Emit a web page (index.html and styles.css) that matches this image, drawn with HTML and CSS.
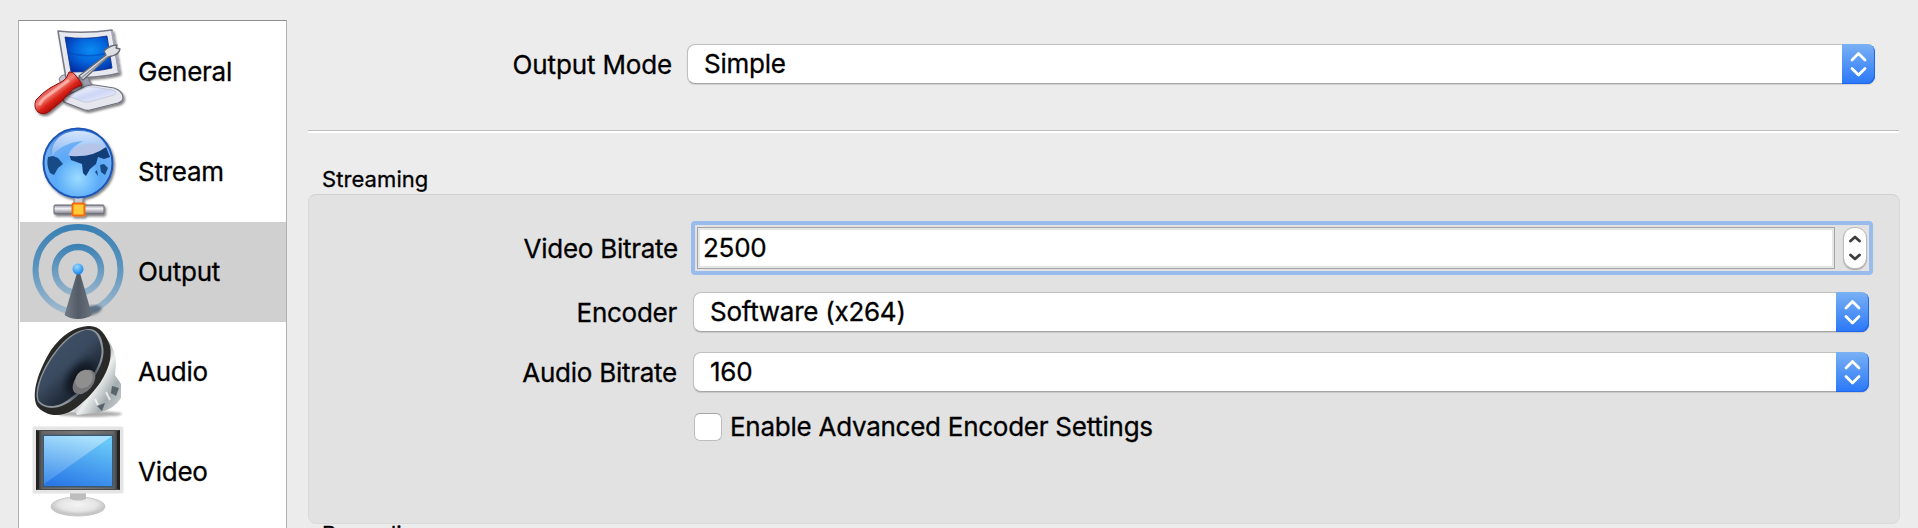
FILE: index.html
```html
<!DOCTYPE html>
<html lang="en">
<head>
<meta charset="utf-8">
<title>Settings</title>
<link rel="stylesheet" href="styles.css">
</head>
<body>
<div class="window">
  <nav class="sidebar">
    <div class="item">
      <svg class="icon" viewBox="0 0 100 100">
        <defs>
          <radialGradient id="scr" cx=".55" cy=".4" r=".65"><stop offset="0" stop-color="#0a8cf2"/><stop offset=".5" stop-color="#0566dc"/><stop offset="1" stop-color="#0230a8"/></radialGradient>
          <linearGradient id="red" gradientUnits="userSpaceOnUse" x1="22" y1="62" x2="36" y2="80"><stop offset="0" stop-color="#d03028"/><stop offset=".35" stop-color="#f4847a"/><stop offset=".65" stop-color="#dc2418"/><stop offset="1" stop-color="#a00808"/></linearGradient>
          <linearGradient id="base" x1="0" y1="0" x2="1" y2="1"><stop offset="0" stop-color="#fff"/><stop offset=".5" stop-color="#cdd6f6"/><stop offset="1" stop-color="#f4f4fa"/></linearGradient>
          <filter id="soft" x="-20%" y="-20%" width="140%" height="140%"><feDropShadow dx="1.5" dy="2" stdDeviation="1" flood-opacity=".5"/></filter>
        </defs>
        <g filter="url(#soft)">
          <path d="M31 57Q34 50 42 55L60 64L54 69L37 71Z" fill="#c5c6d2" stroke="#7d7f8c"/>
          <path d="M50 54L60 53Q60 60 66 65L54 68Z" fill="#9b9dab" stroke="#6e707d"/>
          <path d="M35 76L54 66Q60 62 67 63L86 66Q95 69 95 76Q95 79 90 81L62 88Q58 89 54 87L36 80Z" fill="#e5e6ee" stroke="#6e707d" stroke-width="1.2"/>
          <path d="M40 74L57 66Q61 64 66 65L84 68Q91 70 86 73L61 80Q57 81 53 79Z" fill="url(#base)" stroke="#b7bccd" stroke-width=".6"/>
          <path d="M30 9Q57 12 84 8L91 51Q73 56 38 56Z" fill="#e8e8ef" stroke="#777987" stroke-width="1.5" stroke-linejoin="round"/>
          <path d="M84 9L91 51" stroke="#a3a5b5" stroke-width="2"/>
        </g>
        <path d="M37 15Q57 18 79 14L84 46Q68 50 43 50Z" fill="url(#scr)" stroke="#0a2c86" stroke-width=".8"/>
        <path d="M41 31Q62 37 82 30" fill="none" stroke="#0448b8" stroke-width="1.5" opacity=".6"/>
        <path d="M51 54L78 33L76 29Q82 23 89 23L88 26L92 27Q91 32 84 34L80 35L55 58Z" fill="#dedfe3" stroke="#666975" stroke-width="1.3" stroke-linejoin="round"/>
        <path d="M52 57L79 35" stroke="#8e919b" stroke-width="1.2"/>
        <g filter="url(#soft)">
          <path d="M41 50Q45 49 48 54Q52 58 54 63Q49 65 45 67Q39 73 34 79L22 89Q16 94 10 90Q5 85 8 78Q14 71 22 66L35 59Q39 57 41 50Z" fill="url(#red)" stroke="#8e1010" stroke-width="1"/>
        </g>
        <path d="M40 59L22 72Q14 77 12 82" fill="none" stroke="#ffd1cb" stroke-width="3" stroke-linecap="round" opacity=".55"/>
      </svg>
      <span class="name">General</span>
    </div>
    <div class="item">
      <svg class="icon" viewBox="0 0 100 100">
        <defs>
          <radialGradient id="globe" cx=".5" cy=".72" r=".72"><stop offset="0" stop-color="#9bdcff"/><stop offset=".45" stop-color="#5aaaf8"/><stop offset=".8" stop-color="#74b0f4"/><stop offset="1" stop-color="#3676da"/></radialGradient>
          <linearGradient id="gloss" x1="0" y1="0" x2="0" y2="1"><stop offset="0" stop-color="#e6f1ff"/><stop offset="1" stop-color="#a9c7f4" stop-opacity=".6"/></linearGradient>
          <linearGradient id="pipe" x1="0" y1="0" x2="0" y2="1"><stop offset="0" stop-color="#90909b"/><stop offset=".4" stop-color="#f2f2f6"/><stop offset="1" stop-color="#777783"/></linearGradient>
        </defs>
        <g filter="url(#soft)">
          <rect x="46" y="72" width="9" height="11" fill="#c9cad2" stroke="#787b88"/>
          <rect x="26" y="83" width="50" height="9" rx="1" fill="url(#pipe)" stroke="#656570"/>
          <rect x="44.500" y="81.500" width="12" height="12" rx="1" fill="#ffca38" stroke="#f26a10" stroke-width="2"/>
          <circle cx="50" cy="41" r="34.500" fill="url(#globe)" stroke="#1c54b4" stroke-width="2"/>
        </g>
        <path d="M20 35L25 34L30 36L35 42L30 46L26 53L22 51Q18 43 20 35Z" fill="#174b86"/>
        <path d="M22 28L27 21L36 17L28 30L23 33Z" fill="#5f9ee0" opacity=".6"/>
        <path d="M41 32Q54 34 70 27L78 25L82 35L76 37L70 35L68 42L62 47L58 54L55 51L54 42L43 38Z" fill="#123f79"/>
        <path d="M72 43L76 42L80 46L77 53L73 50ZM67 50L69 48L70 54Z" fill="#174b86"/>
        <path d="M24 34C23 18 35 9 50 9C66 9 75 16 78 25C68 28 62 34 51 34C43 34 40 32 42 29C47 23 52 21 55 19C43 20 32 24 24 34Z" fill="url(#gloss)" opacity=".9"/>
        <path d="M40 33Q46 24 58 22Q70 20 78 25Q66 34 51 34Q43 35 40 33Z" fill="#b5c5ea"/>
      </svg>
      <span class="name">Stream</span>
    </div>
    <div class="item selected">
      <svg class="icon" viewBox="0 0 100 100">
        <defs>
          <linearGradient id="ring" gradientUnits="userSpaceOnUse" x1="0" y1="2" x2="0" y2="92"><stop offset="0" stop-color="#3a80b4"/><stop offset=".45" stop-color="#5792bd"/><stop offset="1" stop-color="#a4bbce"/></linearGradient>
          <linearGradient id="ring2" gradientUnits="userSpaceOnUse" x1="0" y1="22" x2="0" y2="74"><stop offset="0" stop-color="#3a80b4"/><stop offset="1" stop-color="#98b5cc"/></linearGradient>
          <linearGradient id="cone" x1="0" y1="0" x2="1" y2="0"><stop offset="0" stop-color="#737b86"/><stop offset=".5" stop-color="#535b66"/><stop offset="1" stop-color="#6a727d"/></linearGradient>
          <radialGradient id="ball" cx=".4" cy=".3" r=".7"><stop offset="0" stop-color="#9ad8ff"/><stop offset="1" stop-color="#1689ee"/></radialGradient>
          <filter id="blur"><feGaussianBlur stdDeviation="1.200"/></filter>
        </defs>
        <circle cx="50" cy="47.500" r="42.500" fill="none" stroke="url(#ring)" stroke-width="6"/>
        <circle cx="50" cy="48" r="23" fill="none" stroke="url(#ring2)" stroke-width="6.500"/>
        <path d="M55 92L61 84Q70 82 74 86Q73 92 60 94Z" fill="#3b4d60" opacity=".65" filter="url(#blur)"/>
        <path d="M49 51H52L64 93Q58 97 50 97Q42 97 36.500 93Z" fill="url(#cone)"/>
        <circle cx="50" cy="47" r="5.500" fill="url(#ball)"/>
      </svg>
      <span class="name">Output</span>
    </div>
    <div class="item">
      <svg class="icon" viewBox="0 0 100 100">
        <defs>
          <linearGradient id="dish" x1="0" y1="0" x2=".8" y2="1"><stop offset="0" stop-color="#43546b"/><stop offset=".5" stop-color="#3a4a5f"/><stop offset=".8" stop-color="#1a232f"/><stop offset="1" stop-color="#3c495c"/></linearGradient>
          <linearGradient id="metal" x1="0" y1="0" x2="1" y2="1"><stop offset="0" stop-color="#39444b"/><stop offset=".35" stop-color="#7c878b"/><stop offset=".55" stop-color="#eceeee"/><stop offset=".75" stop-color="#a3acaf"/><stop offset="1" stop-color="#d6dada"/></linearGradient>
          <radialGradient id="well"><stop offset="0" stop-color="#05080c"/><stop offset=".55" stop-color="#101822" stop-opacity=".7"/><stop offset="1" stop-color="#25354a" stop-opacity="0"/></radialGradient>
        </defs>
        <ellipse cx="62" cy="92" rx="32" ry="3" fill="#777" opacity=".6" filter="url(#blur)"/>
        <path d="M78 16Q88 27 88 42L87 53L93 62V76Q86 87 73 90L49 93L45 86Z" fill="url(#metal)"/>
        <path d="M84 64L91 66L88 74L83 71ZM69 84L77 81L74 89Z" fill="#38434a" opacity=".7"/>
        <path d="M78 70L82 78M67 77L70 83" stroke="#fff" stroke-width="2" opacity=".7"/>
        <path d="M60 4C71 3 78 12 82 24C87 48 64 75 45 88C31 97 16 93 9 84C3 72 10 49 23 28C34 13 46 5 60 4Z" fill="#292a28"/>
        <path d="M60 7C68 6 74 13 75 24C79 43 60 67 43 79C29 89 16 87 10 80C5 69 14 47 26 31C37 16 48 8 60 7Z" fill="#8d949a"/>
        <path d="M58 8C67 7 71 14 73 24C77 41 59 65 41 77C28 87 17 85 11 79C7 69 15 48 27 32C37 18 48 10 58 8Z" fill="url(#dish)"/>
        <ellipse cx="52" cy="56" rx="17" ry="29" transform="rotate(38 52 56)" fill="url(#well)"/>
        <ellipse cx="56" cy="60" rx="9" ry="14" transform="rotate(40 56 60)" fill="#777678"/>
        <ellipse cx="56" cy="57" rx="8" ry="10" transform="rotate(40 56 57)" fill="#908f90"/>
      </svg>
      <span class="name">Audio</span>
    </div>
    <div class="item">
      <svg class="icon" viewBox="0 0 100 100">
        <defs>
          <linearGradient id="lcd" x1=".6" y1="0" x2=".2" y2="1"><stop offset="0" stop-color="#68c8f8"/><stop offset="1" stop-color="#2a78e6"/></linearGradient>
          <linearGradient id="shine" x1=".5" y1="0" x2=".2" y2="1"><stop offset="0" stop-color="#a7e0fc"/><stop offset="1" stop-color="#4390ec"/></linearGradient>
          <linearGradient id="frame" x1="0" y1="0" x2="1" y2="0"><stop offset="0" stop-color="#222"/><stop offset=".08" stop-color="#666"/><stop offset=".5" stop-color="#777"/><stop offset=".92" stop-color="#666"/><stop offset="1" stop-color="#222"/></linearGradient>
          <radialGradient id="foot" cy=".4"><stop offset="0" stop-color="#f4f4f4"/><stop offset=".7" stop-color="#e5e5e5"/><stop offset="1" stop-color="#c7c7c7"/></radialGradient>
        </defs>
        <ellipse cx="50" cy="84.500" rx="27" ry="9.500" fill="url(#foot)" stroke="#c1c1c1" stroke-width=".8"/>
        <path d="M42 70H58V77Q50 80 42 77Z" fill="#bdbdbd"/>
        <rect x="4.500" y="4.500" width="91" height="67" rx="1.500" fill="#e5e5e5"/>
        <rect x="8" y="8" width="84" height="60" fill="url(#frame)"/>
        <path d="M9.500 8V68M90.500 8V68" stroke="#222" stroke-width="3"/>
        <path d="M9 8.500H91M9 67.500H91" stroke="#484848"/>
        <rect x="14.500" y="12.500" width="71" height="53" fill="#3e5870"/>
        <rect x="16" y="14" width="68" height="50" fill="url(#lcd)"/>
        <path d="M16 14H84L16 62Z" fill="url(#shine)"/>
      </svg>
      <span class="name">Video</span>
    </div>
  </nav>

  <main class="panel">
    <div class="row mode">
      <label class="label">Output Mode</label>
      <div class="combo"><span class="value">Simple</span><span class="arrows"><svg viewBox="0 0 33 40"><path d="M10 16L16.500 9.500L23 16M10 24.500L16.500 31L23 24.500"/></svg></span></div>
    </div>
    <hr class="rule">
    <h2 class="title">Streaming</h2>
    <section class="group">
      <div class="row bitrate">
        <label class="label">Video Bitrate</label>
        <div class="focus">
          <div class="field">2500</div>
          <div class="stepper"><svg viewBox="0 0 22 40"><path d="M6.500 13L11 9L15.500 13M6.500 27L11 31L15.500 27"/></svg></div>
        </div>
      </div>
      <div class="row encoder">
        <label class="label">Encoder</label>
        <div class="combo"><span class="value">Software (x264)</span><span class="arrows"><svg viewBox="0 0 33 40"><path d="M10 16L16.500 9.500L23 16M10 24.500L16.500 31L23 24.500"/></svg></span></div>
      </div>
      <div class="row audio">
        <label class="label">Audio Bitrate</label>
        <div class="combo"><span class="value">160</span><span class="arrows"><svg viewBox="0 0 33 40"><path d="M10 16L16.500 9.500L23 16M10 24.500L16.500 31L23 24.500"/></svg></span></div>
      </div>
      <div class="check"><span class="box"></span><span class="advanced">Enable Advanced Encoder Settings</span></div>
    </section>
    <h2 class="title next">Recording</h2>
  </main>
</div>
</body>
</html>
```
FILE: styles.css
```css
* { box-sizing: border-box; }
body {
  margin: 0;
  background: #ececec;
  color: #000;
  font: 26px/32px Inter, "Liberation Sans", sans-serif;
  letter-spacing: -.26px;
  -webkit-text-stroke: .3px #000;
}
.window { display: flex; height: 528px; overflow: hidden; }
.sidebar {
  flex: none;
  width: 269px;
  height: 540px;
  margin: 20px 21px 0 18px;
  padding: 1px 0 0 1px;
  background: #fff;
  border: 1px solid #b0b0b0;
  border-top-color: #8e8e8e;
}
.item { display: flex; align-items: center; height: 100px; padding-left: 8px; }
.selected { background: #d0d0d0; }
.icon { width: 100px; height: 100px; flex: none; margin-right: 10px; }
.name, .label, .value, .advanced { white-space: nowrap; }
.panel { flex: none; width: 1592px; }
.row { display: flex; }
.label { flex: none; text-align: right; }
.mode { padding: 44px 25px 0 0; }
.mode .label { width: 364px; margin-right: 15px; padding-top: 5px; letter-spacing: -.15px; }
.combo {
  display: flex;
  flex: 1;
  height: 40px;
  background: #fff;
  border: 1px solid #bfbfbf;
  border-bottom-color: #a5a5a5;
  border-radius: 8px;
  box-shadow: 0 1px 1px rgba(0, 0, 0, .12);
}
.value { flex: 1; padding: 3px 0 0 16px; }
.arrows {
  width: 33px;
  height: 40px;
  margin: -1px -1px -1px 0;
  background: linear-gradient(#7ab1f4, #2a77f8);
  border-radius: 0 8px 8px 0;
  box-shadow: inset -1px -1px #2167ee;
}
.arrows svg, .stepper svg { display: block; fill: none; stroke: #fff; stroke-width: 2.8; stroke-linecap: round; stroke-linejoin: round; }
.rule { height: 3px; margin: 46px 1px 0 0; border: 0; border-top: 1px solid #bcbcbc; background: #fff; }
.title { margin: 32px 0 0 14px; font-size: 22px; font-weight: 400; line-height: 28px; letter-spacing: .08px; }
.group {
  height: 330px;
  margin-top: 1px;
  padding: 26px 26px 0 0;
  background: #e2e2e2;
  border: 1px solid #dadada;
  border-top-color: #d0d0d0;
  border-radius: 8px;
}
.bitrate .label { width: 369px; margin-right: 13px; padding-top: 12px; }
.focus { display: flex; flex: 1; height: 54px; padding: 2px; border: 4px solid #9abcec; border-radius: 4px; }
.focus .field { flex: 1; height: 42px; padding: 4px; padding-left: 5px; border: 1px solid #a5a5a5; box-shadow: inset 0 0 0 2px #e6e6e6; background: #fff; }
.stepper { width: 24px; height: 42px; margin: 0 0 0 8px; background: #fff; border: 1px solid #bbb; border-radius: 11px; box-shadow: 0 1px 1px rgba(0, 0, 0, .25); }
.stepper svg { stroke: #3d3d3d; }
.encoder, .audio { padding-right: 4px; }
.encoder { margin-top: 17px; }
.audio { margin-top: 20px; }
.encoder .label, .audio .label { width: 368px; margin-right: 16px; padding-top: 5px; }
.check { display: flex; align-items: center; margin: 18px 0 0 385px; }
.box { width: 28px; height: 28px; background: #fff; border: 1px solid #bdbdbd; border-top-color: #a5a5a5; border-radius: 6px; }
.advanced { margin-left: 8px; padding-top: 1px; }
.next { margin-top: -4px; }
```
